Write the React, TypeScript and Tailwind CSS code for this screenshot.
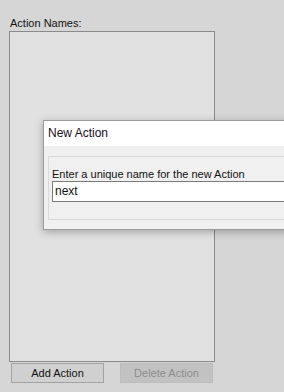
import React from 'react'

const FONT = { fontFamily: '"Liberation Sans", Arial, sans-serif' }

export default function App() {
  return (
    <div className="relative w-[284px] h-[392px] overflow-hidden bg-[#d6d6d6] text-[11px] text-[#111]" style={FONT}>
      <div className="pl-[10px] pt-[17px] leading-[13px]">Action Names:</div>
      <div className="ml-[9px] mt-[1px] w-[206px] h-[331px] border border-[#8a8a8a] bg-[#e1e1e1]" />
      <div className="flex gap-[16px] pl-[11px] pt-[1px]">
        <button className="w-[93px] h-[20px] border border-[#a3a3a3] bg-[#d0d0d0] text-[#111] leading-[18px]">Add Action</button>
        <button disabled className="w-[93px] h-[20px] border border-[#bdbdbd] bg-[#c2c2c2] text-[#8c8c8c] leading-[18px]">Delete Action</button>
      </div>

      {/* modal dialog */}
      <div className="absolute left-[43px] top-[120px] w-[260px] h-[110px] border border-[#9a9a9a] bg-[#f0f0f0] shadow-[0_2px_8px_rgba(0,0,0,0.28)]">
        <div className="h-[25px] bg-white pl-[4px] pt-[5px] text-[12px] text-[#1b0d24] leading-[14px]">New Action</div>
        <div className="mx-[4px] mt-[10px] h-[64px] border border-[#d9d9d9] px-[3px] pt-[11px]">
          <div className="leading-[13px] text-[#111]">Enter a unique name for the new Action</div>
          <div className="mt-[0px] h-[21px] border border-[#7a7a7a] bg-white pl-[2px] text-[12px] leading-[19px] text-[#111]">next</div>
        </div>
      </div>
    </div>
  )
}
